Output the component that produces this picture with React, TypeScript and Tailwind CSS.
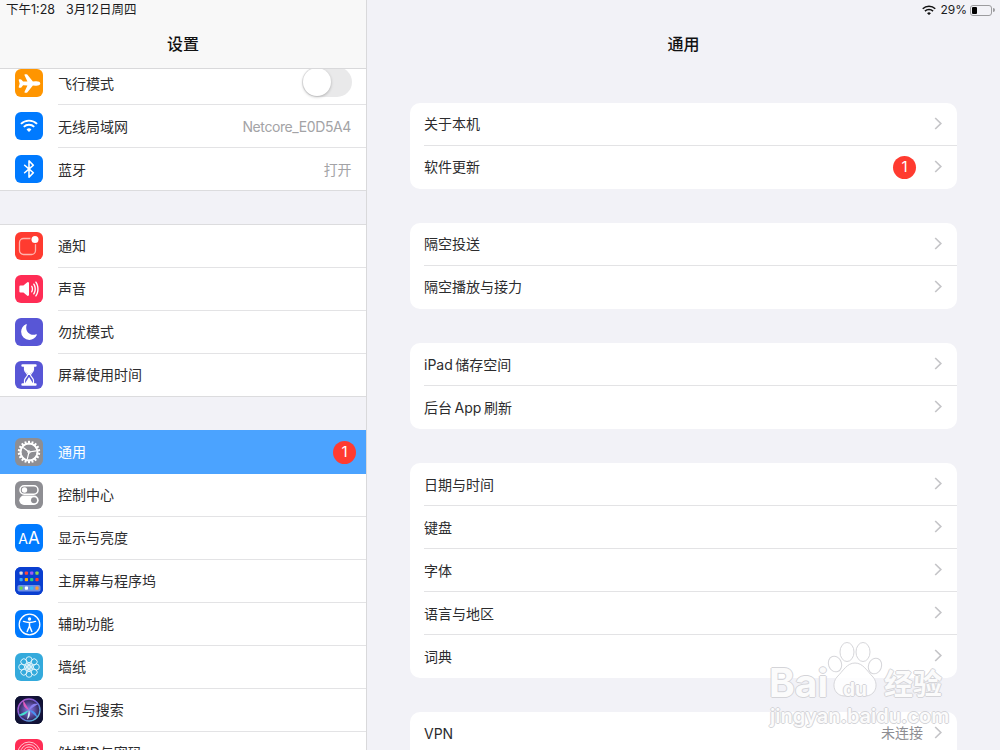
import type { ReactNode } from 'react';
import { IoAirplane, IoBluetooth, IoMoon, IoVolumeHigh } from 'react-icons/io5';

const font = 'font-["Inter","Noto_Sans_CJK_SC",sans-serif]';

const Chevron = () => (
  <svg width="8" height="13" viewBox="0 0 8 13" fill="none" className="mb-[2px] shrink-0">
    <path d="M1.2 1 6.8 6.5 1.2 12" stroke="#c5c5c8" strokeWidth="1.7" />
  </svg>
);

const Badge = () => (
  <span className="flex h-[23px] w-[23px] shrink-0 items-center justify-center rounded-full bg-[#ff3b30] text-[15px] text-white">
    1
  </span>
);

const WifiGlyph = ({ size, color }: { size: number; color: string }) => (
  <svg width={size} height={size * 0.74} viewBox="0 0 19 14" fill="none">
    <path d="M1 5.2a12 12 0 0 1 17 0" stroke={color} strokeWidth="2" />
    <path d="M4 8.3a7.8 7.8 0 0 1 11 0" stroke={color} strokeWidth="2" />
    <path d="M9.5 13.6 6.9 11a3.7 3.7 0 0 1 5.2 0Z" fill={color} />
  </svg>
);

const NotificationIcon = () => (
  <svg width="22" height="22" viewBox="0 0 22 22" fill="none">
    <rect x="1.5" y="3.5" width="16" height="16" rx="4" stroke="#ffb3ac" strokeWidth="1.3" />
    <circle cx="17" cy="4.500" r="4.800" fill="#ff3b30" />
    <circle cx="17" cy="4.500" r="3.500" fill="white" />
  </svg>
);

const HourglassIcon = () => (
  <svg width="16" height="22" viewBox="0 0 16 22" fill="none">
    <path d="M1.5 1.5h13M1.5 20.5h13" stroke="white" strokeWidth="2.4" strokeLinecap="round" />
    <path d="M3.5 2.5v3c0 2.5 3 4 3 5.5s-3 3-3 5.5v3h9v-3c0-2.500-3-4-3-5.500s3-3 3-5.500v-3Z" stroke="white" strokeWidth="1.200" />
    <path d="M3.800 3h8.400v2.500c0 2-3.100 3.500-3.300 5.500H7.100C6.900 9 3.800 7.500 3.800 5.500ZM8 13l3.800 6H4.200Z" fill="white" />
  </svg>
);

const GearIcon = () => {
  const teeth = Array.from({ length: 18 }, (_, i) => i * 20);
  return (
    <svg width="24" height="24" viewBox="0 0 24 24" fill="none">
      {teeth.map((deg) => (
        <rect key={deg} x="11" y="0.800" width="2" height="3.600" fill="white" transform={`rotate(${deg} 12 12)`} />
      ))}
      <circle cx="12" cy="12" r="8.500" stroke="white" strokeWidth="1.800" />
      <path d="M12 12 6.200 7.500M12 12l7.200-1.200M12 12l-1.800 7.300" stroke="white" strokeWidth="1.200" />
      <circle cx="12" cy="12" r="1.300" stroke="white" strokeWidth="0.800" />
    </svg>
  );
};

const ControlIcon = () => (
  <svg width="22" height="22" viewBox="0 0 22 22" fill="none">
    <rect x="2" y="1.800" width="18" height="8.400" rx="4.200" stroke="white" strokeWidth="1.500" />
    <circle cx="6.500" cy="6" r="2.700" fill="white" />
    <rect x="1.300" y="11.500" width="19.400" height="9.400" rx="4.700" fill="white" />
    <circle cx="16" cy="16.200" r="3" fill="#8e8e93" />
  </svg>
);

const HomeScreenIcon = () => {
  const top = ['#dcdcdc', '#ff453a', '#a05cf0', '#8bd450'];
  const mid = ['#35a8f5', '#ffb200', '#2fce7a', '#ff3b30'];
  const dock = ['#62d84e', '#ffffff', '#35c0f5', '#ff9830'];
  const rows = [top, mid];
  return (
    <svg width="28" height="28" viewBox="0 0 28 28">
      <rect width="28" height="28" fill="#0a3fd0" />
      {rows.map((row, r) =>
        row.map((c, i) => <rect key={`${r}${i}`} x={4.500 + i * 5.300} y={4.500 + r * 6.500} width="3.200" height="3.200" rx="0.800" fill={c} />),
      )}
      <rect x="2.500" y="18" width="23" height="6.500" rx="1.800" fill="#6d8fe4" />
      {dock.map((c, i) => (
        <rect key={c} x={4.500 + i * 5.300} y="19.600" width="3.200" height="3.200" rx="0.800" fill={c} />
      ))}
    </svg>
  );
};

const AccessibilityIcon = () => (
  <svg width="23" height="23" viewBox="0 0 23 23" fill="none">
    <circle cx="11.500" cy="11.500" r="10.300" stroke="white" strokeWidth="1.300" />
    <circle cx="11.500" cy="6" r="1.700" fill="white" />
    <path d="M5.500 8.400c2 .7 4 1 6 1s4-.3 6-1M11.500 9.500v3.700M11.500 13l-2.300 5.500M11.500 13l2.300 5.500" stroke="white" strokeWidth="1.500" strokeLinecap="round" />
  </svg>
);

const FlowerIcon = () => {
  const petals = Array.from({ length: 8 }, (_, i) => i * 45);
  return (
    <svg width="22" height="22" viewBox="0 0 22 22" fill="none" stroke="#e6f6fc" strokeWidth="0.900">
      {petals.map((deg) => (
        <g key={deg} transform={`rotate(${deg} 11 11)`}>
          <circle cx="11" cy="3.700" r="3" />
          <circle cx="11" cy="8.400" r="1.600" />
        </g>
      ))}
    </svg>
  );
};

const SiriIcon = () => (
  <svg width="28" height="28" viewBox="0 0 28 28" fill="none">
    <defs>
      <radialGradient id="siri-bg" cx="50%" cy="50%" r="60%">
        <stop offset="0%" stopColor="#33205a" />
        <stop offset="100%" stopColor="#0c1030" />
      </radialGradient>
      <linearGradient id="siri-ring" x1="0" y1="0" x2="1" y2="1">
        <stop offset="0%" stopColor="#c25bd0" />
        <stop offset="50%" stopColor="#6a5fd8" />
        <stop offset="100%" stopColor="#53d6d8" />
      </linearGradient>
      <radialGradient id="siri-disc" cx="50%" cy="50%" r="50%">
        <stop offset="0%" stopColor="#8c7fe8" />
        <stop offset="55%" stopColor="#5a4a9c" />
        <stop offset="100%" stopColor="#2c2456" />
      </radialGradient>
    </defs>
    <rect width="28" height="28" fill="url(#siri-bg)" />
    <circle cx="14" cy="14" r="11" fill="url(#siri-disc)" stroke="url(#siri-ring)" strokeWidth="1.400" />
    <path d="M14 14 3.500 19c3.500 1.500 7 .5 10.500-5Z" fill="#45e0d0" />
    <path d="M14 14 8.500 4.500c-1 4.500.5 7.500 5.500 9.500Z" fill="#e05cc0" />
    <path d="M14 14l9-6c-4-1-7.500.5-9 6Z" fill="#8a80f0" />
    <path d="M14 14l8 7.500c0-4-3-7-8-7.500Z" fill="#4a90f0" />
    <path d="M14 14l-2 9.500c2.500-2 4-5.500 2-9.500Z" fill="#d8f4ff" />
  </svg>
);

const TouchIdIcon = () => (
  <svg width="28" height="28" viewBox="0 0 28 28" fill="none" stroke="#ffc4ce" strokeWidth="1">
    <circle cx="14" cy="14" r="11" />
    <circle cx="14" cy="14" r="8.500" />
    <circle cx="14" cy="14" r="6" />
    <circle cx="14" cy="14" r="3.500" />
  </svg>
);

type SideItem = { label: string; bg: string; icon: ReactNode; value?: string; toggle?: boolean; badge?: boolean; active?: boolean; low?: boolean };

const group1: SideItem[] = [
  { label: '飞行模式', bg: 'bg-[#ff9500]', icon: <IoAirplane size={23} color="white" />, toggle: true, low: true },
  { label: '无线局域网', bg: 'bg-[#007aff]', icon: <WifiGlyph size={18} color="white" />, value: 'Netcore_E0D5A4', low: true },
  { label: '蓝牙', bg: 'bg-[#007aff]', icon: <IoBluetooth size={20} color="white" />, value: '打开', low: true },
];

const group2: SideItem[] = [
  { label: '通知', bg: 'bg-[#ff3b30]', icon: <NotificationIcon /> },
  { label: '声音', bg: 'bg-[#ff2d55]', icon: <IoVolumeHigh size={22} color="white" /> },
  { label: '勿扰模式', bg: 'bg-[#5856d6]', icon: <IoMoon size={18} color="white" /> },
  { label: '屏幕使用时间', bg: 'bg-[#5856d6]', icon: <HourglassIcon /> },
];

const group3: SideItem[] = [
  { label: '通用', bg: 'bg-[#8e8e93]', icon: <GearIcon />, badge: true, active: true },
  { label: '控制中心', bg: 'bg-[#8e8e93]', icon: <ControlIcon /> },
  { label: '显示与亮度', bg: 'bg-[#007aff]', icon: <span className="text-[17px] leading-none text-white"><span className="text-[14px]">A</span>A</span> },
  { label: '主屏幕与程序坞', bg: 'bg-[#0a3fd0]', icon: <HomeScreenIcon /> },
  { label: '辅助功能', bg: 'bg-[#007aff]', icon: <AccessibilityIcon /> },
  { label: '墙纸', bg: 'bg-[#34aadc]', icon: <FlowerIcon /> },
  { label: 'Siri\u2009与搜索', bg: 'bg-[#0c1030]', icon: <SiriIcon /> },
  { label: '触摸ID与密码', bg: 'bg-[#ff2d55]', icon: <TouchIdIcon /> },
];

const sidePadding = (item: SideItem) => {
  if (item.badge) return 'pr-[10px]';
  if (item.toggle) return 'pr-[14px]';
  return 'pr-[15px]';
};

const SideRow = ({ item, last }: { item: SideItem; last: boolean }) => (
  <div className={`flex items-center pl-[15px] ${last ? 'h-[42px]' : 'h-[43px]'} ${item.active ? 'relative mt-[-1px] h-[44px] bg-[#4ba3ff]' : ''}`}>
    <div className={`mb-[1px] flex h-[28px] w-[28px] shrink-0 items-center justify-center overflow-hidden rounded-[6px] ${item.bg}`}>
      {item.icon}
    </div>
    <div className={`ml-[15px] flex h-full min-w-0 flex-1 items-center justify-between ${sidePadding(item)} ${last || item.active ? '' : 'border-b border-[#e3e3e5]'}`}>
      <span className={`text-[14px] ${item.low ? '' : 'pb-[2px]'} ${item.active ? 'text-white' : 'text-[#2c2c2e]'}`}>{item.label}</span>
      {item.value && <span className="text-[14px] tracking-[-0.4px] text-[#a3a3a6]">{item.value}</span>}
      {item.badge && <Badge />}
      {item.toggle && (
        <span className="mb-[2px] flex h-[30px] w-[50px] items-center rounded-full bg-[#e9e9ea] pl-[1px]">
          <span className="h-[28px] w-[28px] rounded-full bg-white shadow-[0_1px_3px_rgba(0,0,0,0.25)]" />
        </span>
      )}
    </div>
  </div>
);

const SideGroup = ({ items }: { items: SideItem[] }) => (
  <div className="border-y border-[#dcdcde] bg-white">
    {items.map((item, i) => (
      <SideRow key={item.label} item={item} last={i === items.length - 1} />
    ))}
  </div>
);

type MainItem = { label: string; value?: string; badge?: boolean };

const sections: MainItem[][] = [
  [{ label: '关于本机' }, { label: '软件更新', badge: true }],
  [{ label: '隔空投送' }, { label: '隔空播放与接力' }],
  [{ label: 'iPad\u2009储存空间' }, { label: '后台\u2009App\u2009刷新' }],
  [{ label: '日期与时间' }, { label: '键盘' }, { label: '字体' }, { label: '语言与地区' }, { label: '词典' }],
  [{ label: 'VPN', value: '未连接' }, { label: '描述文件' }],
];

const Card = ({ items, low }: { items: MainItem[]; low: boolean }) => (
  <div className="overflow-hidden rounded-[10px] bg-white">
    {items.map((item, i) => (
      <div key={item.label} className="flex h-[43px] items-center pl-[14px]">
        <div className={`flex h-full flex-1 items-center justify-between pr-[15px] ${i < items.length - 1 ? 'border-b border-[#e3e3e5]' : ''}`}>
          <span className={`text-[14px] text-[#2c2c2e] ${low ? '' : 'pb-[2px]'}`}>{item.label}</span>
          <span className="flex items-center">
            {item.value && <span className="mr-[11px] text-[14px] leading-none text-[#8e8e93]">{item.value}</span>}
            {item.badge && <span className="mr-[18px]"><Badge /></span>}
            <Chevron />
          </span>
        </div>
      </div>
    ))}
  </div>
);

const outline = '[text-shadow:1px_0_0_#d4d4d8,-1px_0_0_#d4d4d8,0_1px_0_#d4d4d8,0_-1px_0_#d4d4d8]';

const Watermark = () => (
  <div className="pointer-events-none absolute left-[767px] top-[642px] h-[86px] w-[185px] select-none text-white/90">
    <svg width="56" height="58" viewBox="0 0 56 58" className="absolute left-[60px] top-0" fill="rgba(255,255,255,0.8)" stroke="#d6d6da" strokeWidth="1">
      <ellipse cx="8" cy="22" rx="6.500" ry="8" transform="rotate(-20 8 22)" />
      <ellipse cx="20" cy="10" rx="7" ry="9.500" />
      <ellipse cx="36" cy="10" rx="7" ry="9.500" />
      <ellipse cx="48" cy="24" rx="6.500" ry="8" transform="rotate(20 48 24)" />
      <path d="M28 21c8 0 12 8 18 14 6 7 3 19-8 19-4 0-6-2-10-2s-6 2-10 2C7 54 4 42 10 35c6-6 10-14 18-14Z" />
    </svg>
    <div className={`absolute left-[2px] top-[21px] text-[39px] font-bold leading-none ${outline}`}>Bai</div>
    <div className={`absolute left-[76px] top-[38px] text-[19px] font-bold leading-none ${outline}`}>du</div>
    <div className={`absolute left-[117px] top-[28px] text-[29px] font-bold leading-none ${outline}`}>经验</div>
    <div className={`absolute left-[3px] top-[64px] text-[20px] font-semibold leading-none ${outline}`}>jingyan.baidu.com</div>
  </div>
);

const App = () => (
  <div className={`relative flex h-[750px] w-[1000px] overflow-hidden bg-[#f2f2f7] ${font}`}>
    <aside className="flex w-[367px] shrink-0 flex-col border-r border-[#d9d9db]">
      <header className="z-10 h-[69px] shrink-0 border-b border-[#d9d9db] bg-[#f8f8f8]">
        <div className="flex h-[21px] items-center gap-[11px] pl-[6px] text-[12.5px] text-[#1c1c1e]">
          <span>下午1:28</span>
          <span>3月12日周四</span>
        </div>
        <h1 className="mt-[12px] text-center text-[16px] font-medium leading-[22px] text-[#111]">设置</h1>
      </header>
      <div className="min-h-0 flex-1 overflow-hidden">
        <div className="mt-[-8px] flex flex-col gap-[33px]">
          <SideGroup items={group1} />
          <SideGroup items={group2} />
          <SideGroup items={group3} />
        </div>
      </div>
    </aside>
    <main className="min-w-0 flex-1">
      <div className="flex h-[20px] items-center justify-end pr-[5px] text-[12px] text-[#1c1c1e]">
        <WifiGlyph size={14} color="#111" />
        <span className="ml-[4px] mr-[3px]">29%</span>
        <span className="flex items-center">
          <span className="flex h-[11px] w-[22px] items-center rounded-[3px] border border-[#9c9c9f] p-[1px]">
            <span className="h-full w-[5px] rounded-[1px] bg-black" />
          </span>
          <span className="ml-[1px] h-[4px] w-[2px] rounded-r-full bg-[#9c9c9f]" />
        </span>
      </div>
      <h2 className="mt-[13px] text-center text-[16px] font-medium leading-[22px] text-[#111]">通用</h2>
      <div className="mx-[43px] mt-[48px] flex flex-col gap-[34px]">
        {sections.map((items, i) => (
          <Card key={items[0].label} items={items} low={i >= 2} />
        ))}
      </div>
    </main>
    <Watermark />
  </div>
);

export default App;
